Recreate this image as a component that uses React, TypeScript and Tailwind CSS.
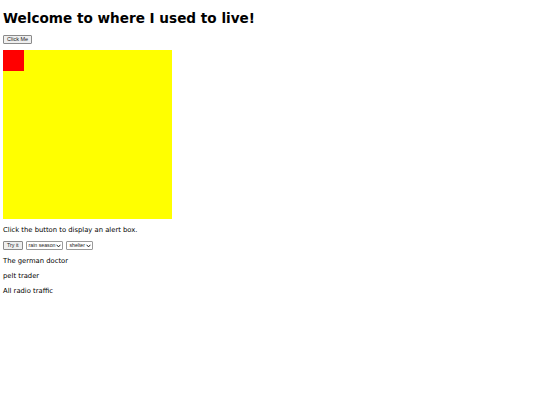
import React from "react";

function Sel({ label }: { label: string }) {
  return (
    <span className="h-[9px] pl-[2px] pr-[1px] flex items-center gap-[1px] text-[5.2px] leading-[7px] border border-[#9a9a9a] rounded-[1px] bg-white font-['Liberation_Sans',sans-serif] text-[#222]">
      <span>{label}</span>
      <svg width="5" height="4" viewBox="0 0 5 4" className="block">
        <path d="M0.6 0.8 L2.5 2.9 L4.4 0.8" fill="none" stroke="#222" strokeWidth="1" />
      </svg>
    </span>
  );
}

export default function App() {
  return (
    <div className="w-[540px] h-[405px] bg-white text-black px-[3px] font-['DejaVu_Sans',sans-serif]">
      <h1 className="pt-[10px] text-[13.6px] leading-[16px] font-bold m-0">Welcome to where I used to live!</h1>
      <div className="mt-[9px] flex">
        <button className="h-[9px] px-[3px] text-[5.5px] leading-[7px] border border-[#8a8a8a] bg-[#efefef] rounded-[1px] font-['Liberation_Sans',sans-serif] text-[#222]">Click Me</button>
      </div>
      <div className="mt-[6px] w-[169px] h-[169px] bg-[#ffff00]">
        <div className="w-[21px] h-[21px] bg-[#ff0000]" />
      </div>
      <p className="mt-[7px] text-[6.8px] leading-[9px]">Click the button to display an alert box.</p>
      <div className="mt-[6px] flex gap-[3px] items-center">
        <button className="h-[9px] px-[3px] text-[5.3px] leading-[7px] border border-[#8a8a8a] bg-[#efefef] rounded-[1px] font-['Liberation_Sans',sans-serif] text-[#222]">Try it</button>
        <Sel label="rain season" />
        <Sel label="shelter" />
      </div>
      <p className="mt-[7px] text-[6.8px] leading-[9px]">The german doctor</p>
      <p className="mt-[6px] text-[6.8px] leading-[9px]">pelt trader</p>
      <p className="mt-[6px] text-[6.8px] leading-[9px]">All radio traffic</p>
    </div>
  );
}
